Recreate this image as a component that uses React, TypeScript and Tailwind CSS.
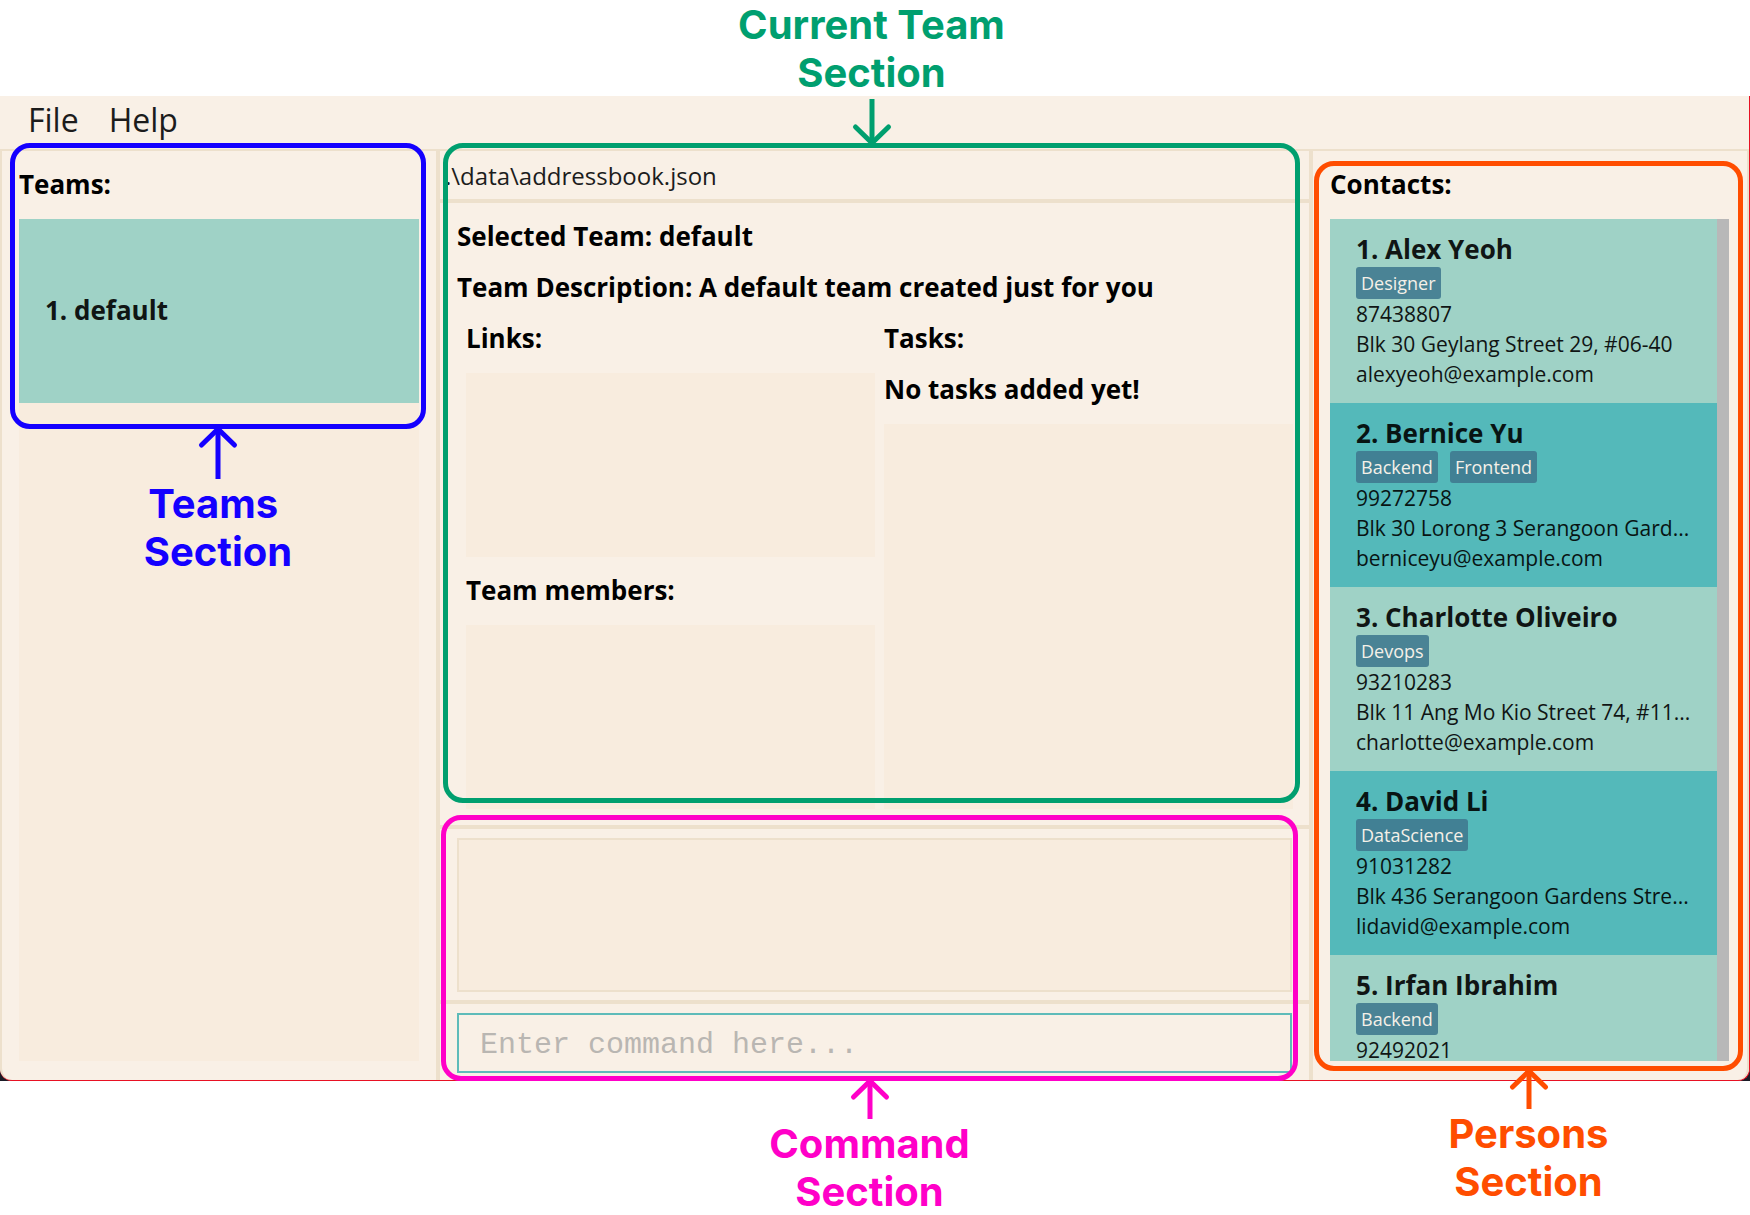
import type { ReactNode } from "react";

type Person = {
  name: string;
  tags: string[];
  phone: string;
  address?: string;
  email?: string;
};

const people: Person[] = [
  {
    name: "Alex Yeoh",
    tags: ["Designer"],
    phone: "87438807",
    address: "Blk 30 Geylang Street 29, #06-40",
    email: "alexyeoh@example.com",
  },
  {
    name: "Bernice Yu",
    tags: ["Backend", "Frontend"],
    phone: "99272758",
    address: "Blk 30 Lorong 3 Serangoon Gard...",
    email: "berniceyu@example.com",
  },
  {
    name: "Charlotte Oliveiro",
    tags: ["Devops"],
    phone: "93210283",
    address: "Blk 11 Ang Mo Kio Street 74, #11...",
    email: "charlotte@example.com",
  },
  {
    name: "David Li",
    tags: ["DataScience"],
    phone: "91031282",
    address: "Blk 436 Serangoon Gardens Stre...",
    email: "lidavid@example.com",
  },
  { name: "Irfan Ibrahim", tags: ["Backend"], phone: "92492021" },
];

function Heading({ children }: { children: ReactNode }) {
  return (
    <h2 className="shrink-0 whitespace-nowrap text-[26px] leading-[51px] font-bold text-black">
      {children}
    </h2>
  );
}

function Arrow({ length, down = false }: { length: number; down?: boolean }) {
  const head = down
    ? `M2.5 ${length - 16}L19 ${length}L35.5 ${length - 16}`
    : "M2.5 16L19 0L35.5 16";
  return (
    <svg
      aria-hidden="true"
      width="38"
      height={length}
      viewBox={`0 0 38 ${length}`}
      className="shrink-0 overflow-visible"
      fill="none"
      stroke="currentColor"
      strokeWidth="5"
    >
      <path d={`M19 0V${length}`} />
      <path d={head} strokeLinecap="round" />
    </svg>
  );
}

/* Coloured outline drawn over a section, with an arrow and a caption. */
function Callout({
  frame,
  label,
  length,
  above = false,
}: {
  frame: string;
  label: string;
  length: number;
  above?: boolean;
}) {
  const text = (
    <p className="text-center font-[Inter,sans-serif] text-[40px] leading-[48px] font-bold whitespace-pre">
      {label}
    </p>
  );
  return (
    <div
      className={`pointer-events-none absolute z-10 rounded-[20px] border-5 border-current ${frame}`}
    >
      {above ? (
        <div className="absolute inset-x-0 bottom-full mb-[5px] flex flex-col items-center gap-[2px]">
          {text}
          <Arrow length={length} down />
        </div>
      ) : (
        <div className="absolute inset-x-0 top-full mt-[5px] flex flex-col items-center gap-px">
          <Arrow length={length} />
          {text}
        </div>
      )}
    </div>
  );
}

function PersonCard({ person, index }: { person: Person; index: number }) {
  const odd = index % 2 === 1;
  return (
    <li
      className={`h-[184px] shrink-0 overflow-hidden pt-3 pr-2 pl-[26px] text-[21px] leading-[30px] whitespace-nowrap ${
        odd ? "bg-[#54b9ba] text-[#081413]" : "bg-[#9fd2c6] text-[#101514]"
      }`}
    >
      <h3 className="text-[26px] leading-9 font-bold">
        {index + 1}. {person.name}
      </h3>
      <div className="flex gap-3">
        {person.tags.map((tag) => (
          <span
            key={tag}
            className={`rounded-[3px] px-[5px] text-[18px] leading-8 text-[#f5f0e8] ${
              odd ? "bg-[#418094]" : "bg-[#4a8395]"
            }`}
          >
            {tag}
          </span>
        ))}
      </div>
      <p>{person.phone}</p>
      {person.address && <p>{person.address}</p>}
      {person.email && <p>{person.email}</p>}
    </li>
  );
}

export default function App() {
  return (
    <div className="flex h-screen flex-col bg-white pt-24 pb-[134px] font-['Open_Sans','Noto_Sans',sans-serif]">
      <div className="flex min-h-0 flex-1 flex-col bg-[#1b1b26]">
        <div className="flex min-h-0 flex-1 flex-col rounded-b-xl border-r border-b border-[#e81123] bg-[#f9f0e6]">
          <nav className="flex h-[53px] shrink-0 items-start gap-[30px] px-7 pt-1 text-[32px] leading-10 text-[#1c1c1c]">
            <button type="button">File</button>
            <button type="button">Help</button>
          </nav>

          <main className="grid min-h-0 flex-1 grid-cols-[436px_4px_minmax(0,1fr)_4px_436px] grid-rows-[minmax(0,1fr)] border-t-2 border-[#ede0cc]">
            <section className="relative flex min-h-0 flex-col rounded-bl-xl border-l-2 border-[#ede0cc] px-[17px] pt-2 pb-[19px]">
              <Heading>Teams:</Heading>
              <ul className="mt-[9px] flex-1 bg-[#f8ecde]">
                <li className="flex h-[184px] items-center bg-[#9fd2c6] pb-[2px] pl-[26px] text-[26px] font-bold text-[#101514]">
                  1. default
                </li>
              </ul>
              <Callout
                frame="-top-2 left-2 right-[10px] h-[286px] text-[#1400ff]"
                label={"Teams \nSection"}
                length={50}
              />
            </section>

            <div className="bg-[#ede0cc]" />

            <div className="flex min-h-0 flex-col">
              <section className="relative flex min-h-0 flex-1 flex-col">
                <p className="h-12 shrink-0 pl-[5px] text-[24px] leading-[50px] text-[#1c1c1c]">
                  .\data\addressbook.json
                </p>
                <div className="h-1 shrink-0 bg-[#ede0cc]" />
                <div className="flex min-h-0 flex-1 flex-col pt-2 pr-4 pb-4 pl-[17px]">
                  <Heading>Selected Team: default</Heading>
                  <Heading>
                    Team Description: A default team created just for you
                  </Heading>
                  <div className="grid min-h-0 flex-1 grid-cols-2 grid-rows-[minmax(0,1fr)] gap-[9px] pl-[9px]">
                    <div className="flex min-h-0 flex-col">
                      <Heading>Links:</Heading>
                      <div className="mt-[9px] mb-2 flex-1 bg-[#f8ecde]" />
                      <Heading>Team members:</Heading>
                      <div className="mt-[9px] flex-1 bg-[#f8ecde]" />
                    </div>
                    <div className="flex min-h-0 flex-col">
                      <Heading>Tasks:</Heading>
                      <Heading>No tasks added yet!</Heading>
                      <div className="mt-[9px] flex-1 bg-[#f8ecde]" />
                    </div>
                  </div>
                </div>
                <Callout
                  frame="-top-2 right-[9px] bottom-[22px] left-[3px] text-[#009f6f]"
                  label={"Current Team\nSection"}
                  length={44}
                  above
                />
              </section>

              <div className="h-1 shrink-0 bg-[#ede0cc]" />

              <section className="relative shrink-0">
                <div className="px-[17px] pt-[9px] pb-2">
                  <output
                    aria-label="Result"
                    className="block h-[154px] border-2 border-[#ede0cc] bg-[#f8ecde]"
                  />
                </div>
                <div className="h-1 bg-[#ede0cc]" />
                <div className="px-[17px] pt-[9px] pb-[7px]">
                  <input
                    type="text"
                    aria-label="Command"
                    placeholder="Enter command here..."
                    className="block h-[60px] w-full border-2 border-[#5ebbb9] bg-transparent px-[21px] pt-1 font-['Courier_New','Liberation_Mono',monospace] text-[30px] text-[#1c1c1c] outline-none placeholder:text-[#b9b6b2]"
                  />
                </div>
                <Callout
                  frame="-top-[14px] right-[11px] -bottom-px left-px text-[#ff00c8]"
                  label={"Command\nSection"}
                  length={38}
                />
              </section>
            </div>

            <div className="bg-[#ede0cc]" />

            <section className="relative flex min-h-0 flex-col rounded-br-xl border-r-2 border-[#ede0cc] pt-2 pr-[17px] pb-[19px] pl-[17px]">
              <Heading>Contacts:</Heading>
              <div className="mt-[9px] mr-px flex min-h-0 flex-1">
                <ul className="flex min-w-0 flex-1 flex-col overflow-hidden">
                  {people.map((person, i) => (
                    <PersonCard key={person.name} person={person} index={i} />
                  ))}
                </ul>
                <div className="w-3 shrink-0 bg-[#b8b8b8]" />
              </div>
              <Callout
                frame="top-[10px] right-1 bottom-[9px] left-px text-[#ff4d00]"
                label={"Persons\nSection"}
                length={38}
              />
            </section>
          </main>
        </div>
      </div>
    </div>
  );
}
